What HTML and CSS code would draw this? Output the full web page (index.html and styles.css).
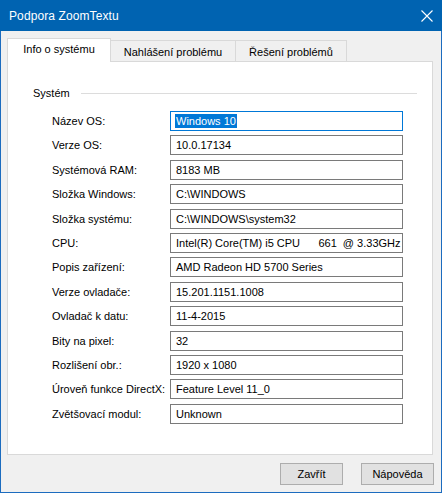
FILE: index.html
```html
<!DOCTYPE html>
<html lang="cs">
<head>
<meta charset="utf-8">
<title>Podpora ZoomTextu</title>
<link rel="stylesheet" href="styles.css">
</head>
<body>
<div class="window">
  <div class="titlebar">
    <span class="title">Podpora ZoomTextu</span>
    <svg class="close" width="12" height="12" viewBox="0 0 12 12"><path d="M0.5 0.5 L11.5 11.5 M11.5 0.5 L0.5 11.5" stroke="#fff" stroke-width="1.1" fill="none"/></svg>
  </div>
  <div class="content">
    <div class="tabs">
      <div class="tab active t1">Info o systému</div>
      <div class="tab t2">Nahlášení problému</div>
      <div class="tab t3">Řešení problémů</div>
    </div>
    <div class="panel">
      <div class="group">
        <div class="legend"><span>Systém</span><div class="line"></div></div>
        <div class="rows">
          <div class="lbl">Název OS:</div><div class="field focus"><span class="sel">Windows 10</span></div>
          <div class="lbl">Verze OS:</div><div class="field">10.0.17134</div>
          <div class="lbl">Systémová RAM:</div><div class="field">8183 MB</div>
          <div class="lbl">Složka Windows:</div><div class="field">C:\WINDOWS</div>
          <div class="lbl">Složka systému:</div><div class="field">C:\WINDOWS\system32</div>
          <div class="lbl">CPU:</div><div class="field">Intel(R) Core(TM) i5 CPU      661  @ 3.33GHz</div>
          <div class="lbl">Popis zařízení:</div><div class="field">AMD Radeon HD 5700 Series</div>
          <div class="lbl">Verze ovladače:</div><div class="field">15.201.1151.1008</div>
          <div class="lbl">Ovladač k datu:</div><div class="field">11-4-2015</div>
          <div class="lbl">Bity na pixel:</div><div class="field">32</div>
          <div class="lbl">Rozlišení obr.:</div><div class="field">1920 x 1080</div>
          <div class="lbl">Úroveň funkce DirectX:</div><div class="field">Feature Level 11_0</div>
          <div class="lbl">Zvětšovací modul:</div><div class="field">Unknown</div>
        </div>
      </div>
    </div>
    <div class="buttons">
      <button class="btn b1">Zavřít</button>
      <button class="btn b2">Nápověda</button>
    </div>
  </div>
</div>
</body>
</html>
```
FILE: styles.css
```css
html, body { margin: 0; padding: 0; background: #f0f0f0; }
body { font-family: "Liberation Sans", Arial, sans-serif; font-size: 11px; color: #000; }
.window {
  width: 442px; height: 493px; box-sizing: border-box;
  border: 1px solid #1c6cbf; border-top: 0; background: #f0f0f0;
  display: flex; flex-direction: column;
}
.titlebar {
  height: 31px; background: #0063b1; color: #fff;
  display: flex; align-items: center; justify-content: space-between;
  padding: 0 9px 0 9px; margin: 0 -1px; flex: none;
}
.title { font-size: 12px; letter-spacing: 0.1px; }
.content { padding: 7px 0 0 6px; }
.tabs { display: flex; align-items: flex-end; height: 23px; position: relative; z-index: 1; }
.tab {
  box-sizing: border-box; border: 1px solid #d9d9d9; border-bottom: 0;
  background: #f0f0f0; height: 21px; display: flex; align-items: center; justify-content: center;
  padding-top: 1px;
}
.tab + .tab { border-left: 0; }
.tab.active { background: #fff; height: 24px; margin-bottom: -1px; padding-top: 0; padding-bottom: 3px; }
.t1 { width: 104px; }
.t2 { width: 125px; }
.t3 { width: 111px; }
.panel {
  width: 426px; height: 394px; box-sizing: border-box;
  border: 1px solid #d9d9d9; background: #fff;
}
.group { padding: 24px 0 0 25px; }
.legend { display: flex; align-items: center; height: 14px; }
.legend .line { height: 1px; background: #dcdcdc; width: 336px; margin-left: 11px; }
.rows {
  display: grid; grid-template-columns: 118px 233px; row-gap: 4.4px;
  margin: 11px 0 0 19px;
}
.lbl { height: 20px; display: flex; align-items: center; }
.field {
  box-sizing: border-box; height: 20px; border: 1px solid #7a7a7a;
  display: flex; align-items: center; padding-left: 5px; white-space: pre; overflow: hidden;
}
.field.focus { border-color: #0078d7; padding-left: 4px; }
.sel { background: #0078d7; color: #fff; line-height: 14px; padding: 0 1px; }
.buttons { display: flex; justify-content: flex-end; padding: 8px 7px 0 0; gap: 18px; }
.btn {
  font-family: "Liberation Sans", Arial, sans-serif; font-size: 11px; color: #000;
  background: #e1e1e1; border: 1px solid #adadad; height: 22px; padding: 0;
  margin: 0;
}
.b1 { width: 63px; }
.b2 { width: 73px; }
```
